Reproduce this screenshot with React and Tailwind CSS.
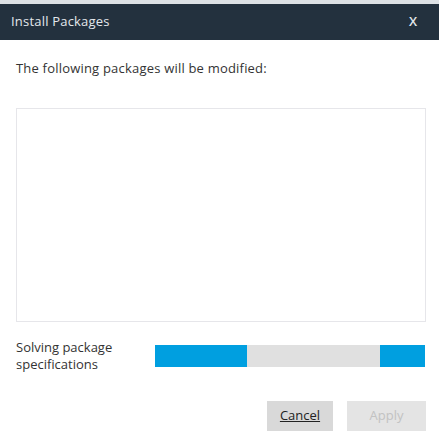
export default function App() {
  return (
    <div
      className="w-[439px] h-[431px] bg-white overflow-hidden flex flex-col text-[#333]"
      style={{ fontFamily: '"Open Sans", "Noto Sans", sans-serif' }}
    >
      <div className="h-[4px] bg-[#dde1e5]" />
      <div className="h-[37px] bg-[#23313e] flex items-center justify-between pl-[11px] pr-[22px] text-[#e4e8ec] text-[13px]">
        <span className="tracking-[0.2px]">Install Packages</span>
        <span className="text-[13px] font-semibold">X</span>
      </div>

      <div className="px-4 pt-[19px] text-[13px] leading-[18px] tracking-[0.2px]">
        The following packages will be modified:
      </div>

      <div className="ml-4 mr-[13px] mt-[31px] h-[214px] shrink-0 border border-[#e6e6ea] bg-white" />

      <div className="flex items-center ml-4 mr-[14px] mt-[17px]">
        <div className="w-[139px] text-[13px] leading-[17px]">
          Solving package
          <br />
          specifications
        </div>
        <div className="flex-1 h-[22px] bg-[#e0e0e0] flex justify-between">
          <div className="w-[92px] bg-[#009fe0]" />
          <div className="w-[45px] bg-[#009fe0]" />
        </div>
      </div>

      <div className="flex justify-end gap-[14px] mr-[13px] mt-[28px]">
        <button className="w-[66px] h-[30px] shrink-0 bg-[#d9d9d9] text-[13px] text-[#222] underline">Cancel</button>
        <button className="w-[79px] h-[30px] shrink-0 bg-[#e4e4e4] text-[13px] text-[#c2c2c2]">Apply</button>
      </div>
    </div>
  );
}
